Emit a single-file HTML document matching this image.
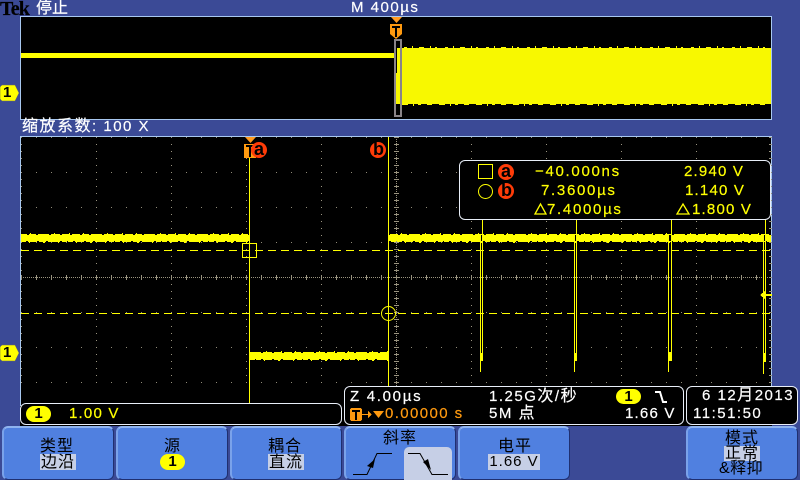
<!DOCTYPE html>
<html><head><meta charset="utf-8">
<style>
html,body{margin:0;padding:0;background:#3b4a96;}
#r{position:relative;width:800px;height:480px;overflow:hidden;background:#3b4a96;font-family:"Liberation Sans","WenQuanYi Zen Hei","Noto Sans CJK SC",sans-serif;}
.t{position:absolute;white-space:nowrap;font-size:15px;line-height:16px;letter-spacing:1.5px;color:#fff;-webkit-text-stroke:.2px currentColor;}
.v{letter-spacing:1.2px}
.w{letter-spacing:1.7px}
.y{color:#ffff00}.o{color:#ff9a10}
.k{color:#000;font-weight:bold;font-size:18px;letter-spacing:0;-webkit-text-stroke:0;}
.z{font-size:16px}
.c{font-size:16px;letter-spacing:1px;line-height:17px;color:#000;-webkit-text-stroke:0;}
.box{position:absolute;background:#000;border:1px solid #e8eef8;border-radius:6px;box-sizing:border-box;}
.btn{position:absolute;top:426px;height:54px;background:#5080e0;border-radius:6px;box-sizing:border-box;border:1px solid #1f2f70;border-top:2px solid #8fb4f0;border-left:2px solid #7aa2ea;}
.hl{position:absolute;background:#c6cfe6;color:#000;text-align:center;font-size:16px;line-height:17px;letter-spacing:1px;white-space:nowrap;}
.pill{position:absolute;background:#ffff00;border-radius:8px;color:#000;text-align:center;font-size:15px;line-height:16px;font-weight:bold;}
svg{position:absolute;left:0;top:0;}
</style></head><body><div id="r">
<svg width="800" height="480" viewBox="0 0 800 480" shape-rendering="crispEdges">
<defs>
<pattern id="rowd" patternUnits="userSpaceOnUse" width="15" height="35" x="21" y="137"><rect width="1" height="1" fill="#8f8a78"/></pattern>
<pattern id="cold" patternUnits="userSpaceOnUse" width="75" height="7" x="21" y="137"><rect width="1" height="1" fill="#9a9480"/></pattern>
<pattern id="hln" patternUnits="userSpaceOnUse" width="2" height="1" x="21" y="277"><rect width="1" height="1" fill="#9a9480"/></pattern>
<pattern id="htk" patternUnits="userSpaceOnUse" width="15" height="5" x="21" y="275"><rect width="1" height="5" fill="#9a9480"/></pattern>
<pattern id="vln" patternUnits="userSpaceOnUse" width="1" height="2" x="396" y="137"><rect width="1" height="1" fill="#9a9480"/></pattern>
<pattern id="vtk" patternUnits="userSpaceOnUse" width="5" height="7" x="394" y="137"><rect width="5" height="1" fill="#9a9480"/></pattern>
<pattern id="dsh" patternUnits="userSpaceOnUse" width="13" height="1" x="21" y="0"><rect width="8" height="1" fill="#ffff00"/></pattern>
<pattern id="nt" patternUnits="userSpaceOnUse" width="53" height="2" x="21" y="233"><path d="M9 0h1v1h-1zM33 0h1v1h-1zM48 0h1v1h-1zM0 1h6v1h-6zM8 1h7v1h-7zM17 1h11v1h-11zM30 1h9v1h-9zM41 1h8v1h-8zM51 1h2v1h-2z" fill="#ffff00"/></pattern>
<pattern id="nb" patternUnits="userSpaceOnUse" width="47" height="2" x="21" y="241"><path d="M0 0h5v1h-5zM7 0h9v1h-9zM18 0h7v1h-7zM27 0h12v1h-12zM41 0h5v1h-5zM8 1h1v1h-1zM22 1h2v1h-2zM37 1h1v1h-1z" fill="#ffff00"/></pattern>
<pattern id="ut" patternUnits="userSpaceOnUse" width="41" height="2" x="400" y="46"><path d="M4 1h3v1h-3zM12 0h1v2h-1zM19 1h5v1h-5zM30 0h1v2h-1zM35 1h2v1h-2z" fill="#ffff00"/></pattern>
<pattern id="ub" patternUnits="userSpaceOnUse" width="37" height="2" x="400" y="104"><path d="M2 0h6v1h-6zM13 0h1v2h-1zM18 0h3v1h-3zM27 0h5v1h-5z" fill="#ffff00"/></pattern>
</defs>

<!-- upper window -->
<rect x="20" y="16" width="752" height="104" fill="#000"/>
<rect x="20.5" y="16.5" width="751" height="103" fill="none" stroke="#a8c8f0"/>
<rect x="21" y="53" width="373" height="5" fill="#ffff00"/>
<rect x="400" y="48" width="371" height="56" fill="#f8f800"/>
<rect x="396" y="73" width="4" height="31" fill="#f8f800"/>
<rect x="397" y="48" width="3" height="25" fill="#f8f800"/>
<rect x="400" y="46" width="371" height="2" fill="url(#ut)"/>
<rect x="400" y="104" width="371" height="2" fill="url(#ub)"/>
<rect x="395" y="40" width="6" height="76" fill="none" stroke="#8a8488" stroke-width="2"/>

<!-- lower window -->
<rect x="20" y="136" width="752" height="290" fill="#000"/>
<rect x="20" y="136" width="752" height="1" fill="#a8c8f0"/>
<rect x="20" y="136" width="1" height="270" fill="#a8c8f0"/>
<rect x="771" y="136" width="1" height="250" fill="#a8c8f0"/>
<rect x="21" y="137" width="750" height="250" fill="url(#rowd)"/>
<rect x="21" y="137" width="751" height="250" fill="url(#cold)"/>
<rect x="21" y="277" width="750" height="1" fill="url(#hln)"/>
<rect x="21" y="275" width="750" height="5" fill="url(#htk)"/>
<rect x="396" y="137" width="1" height="250" fill="url(#vln)"/>
<rect x="394" y="137" width="5" height="250" fill="url(#vtk)"/>
<rect x="769" y="137" width="3" height="250" fill="url(#vtk)"/>
<rect x="21" y="137" width="750" height="2" fill="url(#rowd)"/>

<!-- dashed cursors -->
<g transform="translate(0,250)"><rect x="21" y="0" width="750" height="1" fill="url(#dsh)"/></g>
<g transform="translate(0,313)"><rect x="21" y="0" width="750" height="1" fill="url(#dsh)"/></g>

<!-- waveform -->
<g fill="#ffff00">
<rect x="21" y="235" width="228" height="6"/>
<rect x="388" y="235" width="92" height="6"/>
<rect x="482" y="235" width="92" height="6"/>
<rect x="576" y="235" width="92" height="6"/>
<rect x="671" y="235" width="92" height="6"/>
<rect x="765" y="235" width="6" height="6"/>
<rect x="250" y="353" width="138" height="6"/>
<rect x="21" y="233" width="228" height="2" fill="url(#nt)"/>
<rect x="388" y="233" width="383" height="2" fill="url(#nt)"/>
<rect x="21" y="241" width="228" height="2" fill="url(#nb)"/>
<rect x="388" y="241" width="383" height="2" fill="url(#nb)"/>
<rect x="250" y="351" width="138" height="2" fill="url(#nt)"/>
<rect x="250" y="359" width="138" height="2" fill="url(#nb)"/>
<!-- cursors vertical -->
<rect x="249" y="145" width="1" height="259"/>
<rect x="388" y="137" width="1" height="249"/>
<!-- spikes -->
<rect x="480" y="235" width="1" height="137"/>
<rect x="482" y="219" width="1" height="141"/>
<rect x="481" y="353" width="2" height="8"/>
<rect x="574" y="235" width="1" height="137"/>
<rect x="576" y="219" width="1" height="141"/>
<rect x="575" y="353" width="2" height="8"/>
<rect x="668" y="235" width="1" height="137"/>
<rect x="671" y="219" width="1" height="141"/>
<rect x="669" y="352" width="3" height="9"/>
<rect x="763" y="235" width="1" height="139"/>
<rect x="765" y="219" width="1" height="141"/>
<rect x="764" y="353" width="2" height="9"/>
<!-- trigger level arrow -->
<path d="M760 295l5-4v8zM765 294h7v2h-7z"/>
</g>
<!-- square & circle -->
<rect x="242.500" y="243.500" width="14" height="14" fill="none" stroke="#ffff00"/>
<circle cx="388.500" cy="313.500" r="7" fill="none" stroke="#ffff00" shape-rendering="auto"/>

<!-- markers -->
<path d="M391 17h11l-5.500 6z" fill="#ff9a20" shape-rendering="auto"/>
<path d="M390 24h12v10l-6 5-6-5z" fill="#ff9a10" shape-rendering="auto"/>
<path d="M392 26h8v2h-3v9h-2v-9h-3z" fill="#000"/>
<path d="M245 137h11l-5.500 6z" fill="#ff9a20" shape-rendering="auto"/>
<path d="M244 144h12v14h-12z" fill="#ff9a10"/>
<path d="M246 145h8v2h-3v10h-2v-10h-3z" fill="#000"/>
<circle cx="259" cy="150" r="8" fill="#ff3c08" shape-rendering="auto"/>
<circle cx="378" cy="150" r="8" fill="#ff3c08" shape-rendering="auto"/>

<!-- channel markers -->
<path d="M2 85h13l4 8-4 8h-13l-2-2v-12z" fill="#ffff00" stroke="#666" stroke-width=".5" shape-rendering="auto"/>
<path d="M2 345h13l4 8-4 8h-13l-2-2v-12z" fill="#ffff00" stroke="#666" stroke-width=".5" shape-rendering="auto"/>
</svg>

<!-- header text -->
<div class="t" style="left:0px;top:1px;font-family:'Liberation Serif',serif;font-weight:bold;font-size:20px;letter-spacing:-.8px;color:#000;">Tek</div>
<div class="t" style="left:36px;top:0px;font-size:16px;line-height:18px;letter-spacing:0;">停止</div>
<div class="t" style="left:351px;top:0px;">M 400µs</div>
<div class="t" style="left:22px;top:119px;"><span class="z">缩放系数</span>: 100 X</div>
<div class="t k" style="left:3px;top:85px;font-size:15px;">1</div>
<div class="t k" style="left:3px;top:345px;font-size:15px;">1</div>
<div class="t k" style="left:254px;top:141px;">a</div>
<div class="t k" style="left:373px;top:141px;">b</div>

<!-- cursor readout -->
<div class="box" style="left:459px;top:160px;width:312px;height:60px;"></div>
<svg width="800" height="480" shape-rendering="crispEdges">
<rect x="478.500" y="164.500" width="14" height="14" fill="none" stroke="#ffff00"/>
<circle cx="485.500" cy="191.500" r="7" fill="none" stroke="#ffff00" shape-rendering="auto"/>
<circle cx="506" cy="172" r="8" fill="#ff3c08" shape-rendering="auto"/>
<circle cx="506" cy="191" r="8" fill="#ff3c08" shape-rendering="auto"/>
<path d="M535 214l5.500-10 5.500 10z" fill="none" stroke="#ffff00" stroke-width="1.300" shape-rendering="auto"/>
<path d="M677 214l6-10 6 10z" fill="none" stroke="#ffff00" stroke-width="1.300" shape-rendering="auto"/>
</svg>
<div class="t k" style="left:501px;top:163px;">a</div>
<div class="t k" style="left:501px;top:182px;">b</div>
<div class="t y w" style="left:535px;top:164px;">−40.000ns</div>
<div class="t y w" style="left:541px;top:183px;">7.3600µs</div>
<div class="t y w" style="left:547px;top:202px;">7.4000µs</div>
<div class="t y v" style="left:684px;top:164px;">2.940 V</div>
<div class="t y v" style="left:685px;top:183px;">1.140 V</div>
<div class="t y v" style="left:692px;top:202px;">1.800 V</div>

<!-- bottom readouts -->
<div class="box" style="left:20px;top:403px;width:322px;height:22px;"></div>
<div class="pill" style="left:26px;top:406px;width:25px;height:16px;">1</div>
<div class="t y v" style="left:69px;top:406px;">1.00 V</div>

<div class="box" style="left:344px;top:386px;width:340px;height:39px;"></div>
<div class="t w" style="left:350px;top:389px;">Z 4.00µs</div>
<svg width="800" height="480" shape-rendering="crispEdges">
<rect x="350" y="408" width="12" height="13" rx="2" fill="#ff9a10"/>
<path d="M352 410h8v2h-3v8h-2v-8h-3z" fill="#000"/>
<path d="M362 414h8v1h-8zM368 411l4 3.500-4 3.500z" fill="#ff9a10"/>
<path d="M373 411h11l-5.500 7z" fill="#ff9a10" shape-rendering="auto"/>
<path d="M655 392h5l3 10h4" fill="none" stroke="#fff" stroke-width="2" shape-rendering="auto"/>
</svg>
<div class="t o" style="left:385px;top:406px;letter-spacing:1.4px;">0.00000 s</div>
<div class="t" style="left:489px;top:389px;">1.25G<span class="z">次</span>/<span class="z">秒</span></div>
<div class="t" style="left:489px;top:406px;">5M <span class="z">点</span></div>
<div class="pill" style="left:616px;top:389px;width:25px;height:15px;line-height:15px;">1</div>
<div class="t v" style="left:625px;top:406px;">1.66 V</div>

<div class="box" style="left:686px;top:386px;width:112px;height:39px;"></div>
<div class="t" style="left:702px;top:388px;">6 12<span class="z">月</span>2013</div>
<div class="t" style="left:693px;top:406px;">11:51:50</div>

<!-- buttons -->
<div class="btn" style="left:2px;width:112px;"></div>
<div class="btn" style="left:116px;width:112px;"></div>
<div class="btn" style="left:230px;width:112px;"></div>
<div class="btn" style="left:344px;width:112px;"></div>
<div class="btn" style="left:458px;width:112px;"></div>
<div class="btn" style="left:686px;width:112px;"></div>

<div class="t c" style="left:40px;top:438px;">类型</div>
<div class="hl" style="left:40px;top:454px;width:36px;height:16px;">边沿</div>
<div class="t c" style="left:164px;top:438px;">源</div>
<div class="pill" style="left:160px;top:454px;width:25px;height:16px;">1</div>
<div class="t c" style="left:268px;top:438px;">耦合</div>
<div class="hl" style="left:268px;top:454px;width:36px;height:16px;">直流</div>
<div class="t c" style="left:383px;top:430px;">斜率</div>
<div style="position:absolute;left:404px;top:447px;width:48px;height:33px;background:#c6cfe6;border-radius:5px 5px 0 0;"></div>
<svg width="800" height="480">
<path d="M353 474.500h14l10-21h15" fill="none" stroke="#000" stroke-width="1"/>
<path d="M375 459l-8 7 6 2z" fill="#000"/>
<path d="M408 453.500h12l12 21h16" fill="none" stroke="#000" stroke-width="1"/>
<path d="M431 470l-8-8 5-3z" fill="#000"/>
</svg>
<div class="t c" style="left:498px;top:438px;">电平</div>
<div class="hl" style="left:488px;top:454px;width:52px;height:16px;font-size:15px;line-height:16px;letter-spacing:1px;">1.66 V</div>
<div class="t c" style="left:725px;top:430px;">模式</div>
<div class="hl" style="left:724px;top:446px;width:36px;height:15px;line-height:15px;">正常</div>
<div class="t c" style="left:719px;top:460px;letter-spacing:.5px;">&amp;释抑</div>
</div></body></html>
